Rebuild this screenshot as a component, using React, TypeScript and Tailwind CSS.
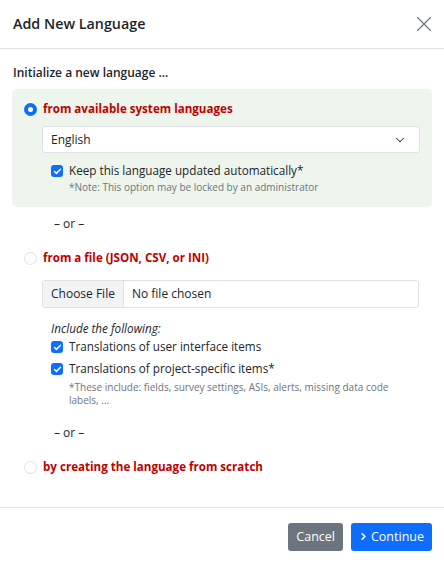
import { X, ChevronDown, ChevronRight, Check } from 'lucide-react';

function Radio({ checked }: { checked?: boolean }) {
  return checked ? (
    <span className="w-[13px] h-[13px] rounded-full bg-[#0d6efd] flex items-center justify-center shrink-0">
      <span className="w-[5px] h-[5px] rounded-full bg-white" />
    </span>
  ) : (
    <span className="w-[13px] h-[13px] rounded-full border border-[#dee2e6] bg-white shrink-0" />
  );
}

function Checkbox() {
  return (
    <span className="w-[12px] h-[12px] rounded-[3px] bg-[#0d6efd] flex items-center justify-center shrink-0">
      <Check className="w-[9px] h-[9px] text-white" strokeWidth={4} />
    </span>
  );
}

function OptionLabel({ checked, text }: { checked?: boolean; text: string }) {
  return (
    <div className="flex items-center gap-[6px] h-[18px]">
      <Radio checked={checked} />
      <span className="text-[#c00000] font-bold text-[11.6px]">{text}</span>
    </div>
  );
}

function Or() {
  return <div className="pl-[42px] text-[12px] leading-[18px] text-[#212529]">– or –</div>;
}

export default function App() {
  return (
    <div className="w-[444px] h-[562px] bg-white text-[#212529] flex flex-col" style={{ fontFamily: '"Open Sans", sans-serif' }}>
      <div className="h-[49px] border-b border-[#dee2e6] flex items-center justify-between pl-[13px] pr-[7px]">
        <h1 className="text-[14.3px] font-semibold">Add New Language</h1>
        <X className="w-[26px] h-[26px] text-[#6c757d]" strokeWidth={1.1} />
      </div>

      <div className="flex-1 px-[12px] pt-[15px]">
        <div className="pl-[1px] text-[12px] leading-[18px] font-semibold mb-[7px]">Initialize a new language ...</div>

        <div className="bg-[#edf5ec] rounded-[5px] pl-[12px] pr-[12px] pt-[11px] pb-[13px]">
          <OptionLabel checked text="from available system languages" />
          <div className="pl-[18px] mt-[8px]">
            <div className="h-[27px] bg-white border border-[#dee2e6] rounded-[3px] flex items-center justify-between pl-[8px] pr-[12px] text-[12px]">
              <span>English</span>
              <ChevronDown className="w-[14px] h-[14px] text-[#343a40]" strokeWidth={1.8} />
            </div>
            <div className="pl-[9px] mt-[9px] h-[18px] flex items-center gap-[6px] text-[11.7px]">
              <Checkbox />
              <span>Keep this language updated automatically*</span>
            </div>
            <div className="pl-[27px] mt-[1px] text-[10px] leading-[13px] text-[#6c757d]">*Note: This option may be locked by an administrator</div>
          </div>
        </div>

        <div className="mt-[8px]">
          <Or />
        </div>

        <div className="mt-[16px] pl-[12px]">
          <OptionLabel text="from a file (JSON, CSV, or INI)" />
        </div>
        <div className="pl-[30px] pr-[13px] mt-[13px]">
          <div className="h-[28px] border border-[#dee2e6] rounded-[3px] flex items-center text-[12px] overflow-hidden">
            <span className="h-full flex items-center px-[8px] bg-[#f1f3f5] border-r border-[#dee2e6]">Choose File</span>
            <span className="pl-[8px]">No file chosen</span>
          </div>
          <div className="pl-[9px] mt-[11px] text-[11.7px] leading-[18px] italic">Include the following:</div>
          <div className="pl-[9px] mt-[1px] h-[18px] flex items-center gap-[6px] text-[11.7px]">
            <Checkbox />
            <span>Translations of user interface items</span>
          </div>
          <div className="pl-[9px] mt-[4px] h-[18px] flex items-center gap-[6px] text-[11.7px]">
            <Checkbox />
            <span>Translations of project-specific items*</span>
          </div>
          <div className="pl-[27px] mt-[3px] text-[10px] leading-[13px] text-[#6c757d]">
            *These include: fields, survey settings, ASIs, alerts, missing data code labels, ...
          </div>
        </div>

        <div className="mt-[17px]">
          <Or />
        </div>

        <div className="mt-[16px] pl-[12px]">
          <OptionLabel text="by creating the language from scratch" />
        </div>
      </div>

      <div className="h-[55px] border-t border-[#dee2e6] flex items-start justify-end gap-[8px] pr-[12px] pt-[15px]">
        <button className="h-[28px] px-[8px] rounded-[3px] bg-[#6c757d] text-white text-[12.5px]">Cancel</button>
        <button className="h-[28px] pl-[7px] pr-[8px] rounded-[3px] bg-[#0d6efd] text-white text-[12.5px] flex items-center gap-[2px]">
          <ChevronRight className="w-[11px] h-[11px] -mt-[1px]" strokeWidth={3.5} />
          Continue
        </button>
      </div>
    </div>
  );
}
